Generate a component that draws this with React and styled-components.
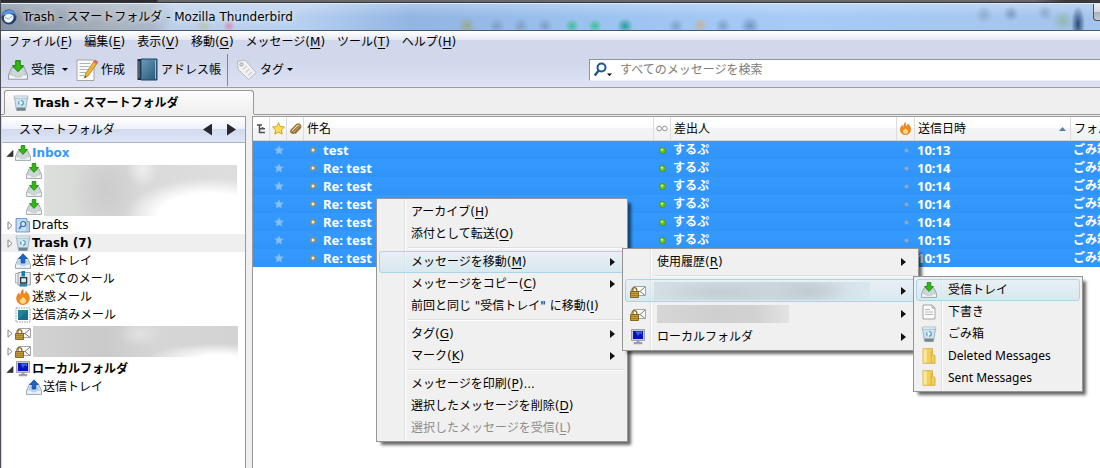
import React from "react";
import styled, { createGlobalStyle, css } from "styled-components";

const GlobalStyle = createGlobalStyle`
  * {
    box-sizing: border-box;
  }

  body {
    margin: 0;
    background-color: #fff;
    color: #000;
    font-family: "DejaVu Sans", "Noto Sans CJK JP", sans-serif;
    font-size: 12px;
    line-height: 18px;
  }

  button {
    margin: 0;
    padding: 0;
    border: none;
    background: none;
    color: inherit;
    font: inherit;
    text-align: left;
    white-space: nowrap;
  }

  svg {
    display: block;
    flex-shrink: 0;
  }
`;

const notoFont = css`
  font-family: "Noto Sans", "Noto Sans CJK JP", sans-serif;
`;

const Window = styled.div`
  position: relative;
  display: flex;
  flex-direction: column;
  min-height: 100vh;
  border-left: 1px solid #4b4e57;
  overflow: hidden;
`;

const Backdrop = styled.div`
  height: 3px;
  background: linear-gradient(90deg, #2c2c2e 0 155px, #66686a 158px 94%, #3a3a3a 97%);
  border-bottom: 1px solid #33373f;
`;

const TitleBar = styled.header`
  display: flex;
  align-items: center;
  gap: 6px;
  height: 28px;
  border-top: 1px solid #dfe9f5;
  border-bottom: 1px solid #46566f;
  background:
    radial-gradient(circle 7px at 571px 22px, #3fbf93, transparent),
    radial-gradient(circle 7px at 594px 22px, #3fbf93, transparent),
    radial-gradient(circle 8px at 624px 22px, #2a9d98, transparent),
    radial-gradient(circle 9px at 466px 22px, #9aa98c, transparent),
    radial-gradient(circle 8px at 496px 22px, #7f9fc4, transparent),
    radial-gradient(circle 8px at 520px 22px, #829fc5, transparent),
    radial-gradient(circle 8px at 544px 22px, #829fc5, transparent),
    radial-gradient(circle 8px at 675px 22px, #7fa2cb, transparent),
    radial-gradient(circle 7px at 699px 21px, #c5b39a, transparent),
    radial-gradient(circle 8px at 722px 22px, #7fa0cc, transparent),
    radial-gradient(circle 10px at 749px 22px, #7397c4, transparent),
    radial-gradient(circle 6px at 228px 22px, #d290b4, transparent),
    radial-gradient(circle 9px at 203px 22px, #b8c6b8, transparent),
    radial-gradient(circle 9px at calc(100% - 116px) 11px, #90adcf, transparent),
    radial-gradient(circle 8px at calc(100% - 89px) 10px, #7f9ec4, transparent),
    radial-gradient(circle 8px at calc(100% - 55px) 9px, #8fabcf, transparent),
    radial-gradient(circle 11px at calc(100% - 37px) 17px, #93b8b0, transparent),
    radial-gradient(ellipse 7px 18px at calc(100% - 22px) 20px, #2c4674, transparent),
    linear-gradient(180deg, rgba(255, 255, 255, 0.25), transparent 50%),
    linear-gradient(90deg, #8794a4 0, #a8b2be 110px, #a9b6c6 150px, #bccfe8 170px, #b7d0f0 300px, #92b5e2 410px, #9cc3f0 600px, #a7cbf6 800px, #a3c4eb 100%);
`;

const Title = styled.h1`
  margin: 0;
  font-size: 12px;
  font-weight: normal;
  text-shadow: 0 0 6px #fff, 0 0 8px rgba(255, 255, 255, 0.6);
`;

const CaptionButton = styled.button`
  align-self: flex-start;
  width: 7px;
  height: 17px;
  margin-left: auto;
  border: 1px solid #4a535f;
  border-top: none;
  border-right: none;
  border-radius: 0 0 0 4px;
  background: linear-gradient(180deg, #eceff2, #d3d8de 50%, #a9b0b9 50%, #c3cad2);
`;

const Chrome = styled.div`
  border-bottom: 1px solid #9b9ca3;
  background: linear-gradient(180deg, #fff 0, #e6e9f4 9px, #d2d8eb 9px, #d2d8eb 30px, #dde2f5 56px);
`;

const MenuBar = styled.nav`
  display: flex;
  gap: 12px;
  padding: 1px 7px 0;
  height: 21px;
`;

const Toolbar = styled.div`
  display: flex;
  align-items: center;
  height: 35px;
  padding-left: 7px;
`;

const ToolButton = styled.button`
  display: flex;
  align-items: center;
  gap: 3px;
  margin-right: ${({ $space }) => $space || 8}px;
`;

const Caret = styled.span`
  width: 0;
  margin-left: ${({ $tight }) => ($tight ? 0 : 4)}px;
  border: 3px solid transparent;
  border-top-color: #000;
  border-bottom: none;
`;

const ToolDivider = styled.div`
  width: 1px;
  height: 32px;
  margin-right: 8px;
  background-color: #83858c;
`;

const SearchBox = styled.label`
  display: flex;
  align-items: center;
  flex: 0 1 511px;
  gap: 7px;
  height: 22px;
  margin-left: auto;
  padding-left: 4px;
  border: 1px solid #8f949f;
  border-right: none;
  border-bottom-color: #eef0f8;
  background-color: #fff;
`;

const SearchInput = styled.input`
  flex: 1;
  min-width: 0;
  padding: 0;
  border: none;
  outline: none;
  background: none;
  font: inherit;

  &::placeholder {
    color: #7b7b7b;
    opacity: 1;
  }
`;

const TabStrip = styled.div`
  display: flex;
  height: 28px;
  background-color: #efefef;

  &::before {
    content: "";
    width: 3px;
    height: 26px;
    border-bottom: 1px solid #999;
  }

  &::after {
    content: "";
    flex: 1;
    height: 26px;
    border-bottom: 1px solid #999;
  }
`;

const Tab = styled.button`
  && {
    display: flex;
    align-items: center;
    gap: 4px;
    width: 250px;
    height: 24px;
    margin-top: 2px;
    padding-left: 8px;
    border: 1px solid #999;
    border-bottom: none;
    border-radius: 3px 3px 0 0;
    background: linear-gradient(180deg, #fcfcfc, #efefef);
    font-weight: bold;
  }
`;

const Body = styled.div`
  display: flex;
  flex: 1;
  gap: 6px;
  background-color: #efefef;
`;

const Sidebar = styled.aside`
  flex: 0 0 245px;
  border-top: 1px solid #999;
  border-right: 1px solid #999;
  border-left: 1px solid #d8d8dc;
  background-color: #fff;
`;

const SidebarHeader = styled.div`
  display: flex;
  align-items: center;
  gap: 15px;
  height: 26px;
  margin-bottom: 1px;
  padding: 0 9px 0 17px;
  border-bottom: 1px solid #a7b2c5;
  background: linear-gradient(180deg, #fff, #eef0f9 50%, #d3daef 50%, #dfe5f6);

  span {
    flex: 1;
  }
`;

const ArrowButton = styled.button`
  width: 9px;
  height: 12px;
  background-color: #26282d;
  clip-path: ${({ $next }) =>
    $next ? "polygon(0 0, 100% 50%, 0 100%)" : "polygon(100% 0, 0 50%, 100% 100%)"};
`;

const FolderList = styled.ul`
  margin: 0;
  padding: 0;
  list-style: none;
`;

const FolderRow = styled.li`
  display: flex;
  align-items: center;
  gap: 1px;
  height: 18px;
  padding-left: ${({ $level }) => ($level ? 24 : 3)}px;
  font-weight: ${({ $bold }) => ($bold ? "bold" : "normal")};
  color: ${({ $active }) => ($active ? "#3399ff" : "#000")};
  background-color: ${({ $selected }) => ($selected ? "#efefef" : "transparent")};
`;

const FolderName = styled.span`
  white-space: nowrap;
`;

const Twisty = styled.span`
  display: flex;
  justify-content: center;
  width: 9px;
`;

const HiddenGroup = styled.li`
  display: flex;

  > ul {
    flex-shrink: 0;
  }
`;

const smudges = {
  inbox: `
    radial-gradient(ellipse 85px 38px at 86% 100%, #fff 60%, rgba(255, 255, 255, 0)),
    radial-gradient(ellipse 16px 18px at 51% 8%, #eee, rgba(238, 238, 238, 0)),
    radial-gradient(ellipse 34px 40px at 32% 50%, #cccccc, rgba(204, 204, 204, 0)),
    linear-gradient(90deg, #dcdfdc, #d5d5d5 35%, #dadada 55%, #dedede)`,
  account: `
    radial-gradient(ellipse 70px 16px at 90% 108%, #fff 30%, rgba(255, 255, 255, 0)),
    radial-gradient(ellipse 22px 14px at 52% 25%, #e2e2e2, rgba(226, 226, 226, 0)),
    linear-gradient(90deg, #d2d2d2, #cacaca 35%, #d6d6d6 60%, #d3d3d3)`,
  highlight: `
    radial-gradient(ellipse 40px 12px at 72% 50%, #c0cad0, rgba(192, 202, 208, 0)),
    radial-gradient(ellipse 60px 12px at 30% 55%, #c3ced3, rgba(195, 206, 211, 0)),
    linear-gradient(90deg, #d3dfe4, #cbd6db 60%, #d9e7ee)`,
  plain: "linear-gradient(90deg, #d6d6d6, #cfcfcf 45%, #d2d2d2 75%, #e3e3e3)",
};

const Smudge = styled.div`
  flex: ${({ $width }) => ($width ? "0 0 auto" : "1")};
  width: ${({ $width }) => ($width ? `${$width}px` : "auto")};
  height: ${({ $height }) => $height}px;
  margin: ${({ $margin }) => $margin || "0"};
  background: ${({ $tone }) => smudges[$tone]};
`;

const Messages = styled.main`
  flex: 1;
  min-width: 0;
  border-top: 1px solid #999;
  border-left: 1px solid #999;
  background-color: #fff;
`;

const MessageTable = styled.table`
  width: 100%;
  table-layout: fixed;
  border-collapse: separate;
  border-spacing: 0;
`;

const HeadCell = styled.th`
  height: 24px;
  padding: 0 0 0 ${({ $icon }) => ($icon ? 0 : 3)}px;
  border-right: 1px solid #dcdcde;
  border-bottom: 1px solid #d5d5d5;
  background: linear-gradient(180deg, #fff, #fdfdfd 45%, #f3f4f6 50%, #f1f2f4);
  font-weight: normal;
  text-align: left;
  overflow: hidden;

  &:last-child {
    border-right: none;
  }
`;

const HeadButton = styled.button`
  display: flex;
  align-items: center;
  justify-content: ${({ $icon }) => ($icon ? "center" : "space-between")};
  width: 100%;
  height: 18px;
  padding-right: ${({ $icon }) => ($icon ? 0 : 4)}px;
`;

const MessageRow = styled.tr`
  background: linear-gradient(180deg, #3399ff, #3399ff 40%, #2f93f8);
  color: #fff;
  font-weight: bold;
`;

const Cell = styled.td`
  height: 18px;
  padding: 0 0 0 ${({ $indent }) => $indent || 0}px;
  line-height: 18px;
  white-space: nowrap;
  overflow: hidden;
  ${({ $latin }) =>
    $latin &&
    css`
      ${notoFont}
      font-size: 13px;
    `}

  > svg {
    margin: 0 auto;
  }
`;

const Subject = styled.div`
  display: flex;
  align-items: center;
  gap: 6px;
`;

const Popup = styled.div`
  position: absolute;
  top: ${({ $top }) => $top}px;
  left: ${({ $left }) => $left}px;
  width: ${({ $width }) => $width}px;
  padding: 2px;
  border: 1px solid #959595;
  background: linear-gradient(90deg, #f0f0f0 28px, #dfdfdf 28px 29px, #fff 29px 30px, #f0f0f0 30px);
  background-origin: border-box;
  box-shadow: 4px 4px 3px -1px rgba(0, 0, 0, 0.6);
`;

const MenuItem = styled.button`
  && {
    display: flex;
    align-items: center;
    width: 100%;
    height: ${({ $tall }) => ($tall ? 23 : 22)}px;
    padding-right: 9px;
    border: 1px solid transparent;
    border-radius: 3px;
    color: ${({ disabled }) => (disabled ? "#8d8d8d" : "#000")};
    ${({ $noto }) => $noto && notoFont}
    ${({ $open }) =>
      $open &&
      css`
        border-color: #a9d5e6;
        background: linear-gradient(180deg, rgba(226, 240, 247, 0.55), rgba(207, 230, 240, 0.75));
      `}
  }
`;

const MenuIcon = styled.span`
  display: flex;
  width: 31px;
  padding-left: 4px;
`;

const MenuLabel = styled.span`
  flex: 1;
`;

const Separator = styled.hr`
  height: 2px;
  margin: 2px 1px 2px 29px;
  border: none;
  border-top: 1px solid #dedede;
  border-bottom: 1px solid #fff;
`;

const SubmenuArrow = styled.span`
  border: 4px solid transparent;
  border-left: 5px solid #111;
  border-right: none;
`;

const Key = styled.u`
  text-underline-offset: 2px;
`;

/* icons */

const InboxIcon = ({ size = 16 }) => (
  <svg width={size} height={size} viewBox="0 0 16 16">
    <path d="M3 6h10l2.6 6v3.4H.4V12z" fill="#f3f5f6" stroke="#969da1" strokeWidth=".9" />
    <path d="M3.6 7h8.8l2 5h-3l-1 1.6H5.6L4.6 12h-3z" fill="#cdd7da" stroke="#b3bdc1" strokeWidth=".6" />
    <path d="M6.2.5h3.6v4h2.7L8 9.4 3.5 4.5h2.7z" fill="#31b90d" stroke="#15800a" strokeWidth=".8" />
  </svg>
);

const OutboxIcon = () => (
  <svg width="16" height="16" viewBox="0 0 16 16">
    <path d="M3.5 5h9l3 7v3.4H.5V12z" fill="#eef3f8" stroke="#8f9ba8" strokeWidth=".9" />
    <path d="M4 6.2h8l2.3 5.5h-3.1l-1 1.5H5.8l-1-1.5H1.7z" fill="#b7d3ef" />
    <path d="M6.2 10V5.5H3.7L8 .8l4.3 4.7H9.8V10z" fill="#1766cf" stroke="#0b4093" strokeWidth=".7" />
  </svg>
);

const TrashIcon = ({ size = 16 }) => (
  <svg width={size} height={size} viewBox="0 0 16 16">
    <path d="M1.5 2.5h13l-2 13h-9z" fill="#cfe3ee" stroke="#8ba4b2" strokeWidth=".8" />
    <path d="M3.5 12.5h9l-.5 3H4z" fill="#76858d" />
    <path d="M1.2 1h13.6v2.2H1.2z" fill="#eef6fa" stroke="#94abb8" strokeWidth=".7" />
    <circle cx="8" cy="7.8" r="2.3" fill="#e8f4fb" stroke="#4a97c8" strokeWidth="1.2" strokeDasharray="3.2 1.6" />
  </svg>
);

const DraftsIcon = () => (
  <svg width="16" height="16" viewBox="0 0 16 16">
    <path d="M1 1.5h11v3h2.5V15H1z" fill="#a9cbed" stroke="#6a98c8" strokeWidth=".9" />
    <path d="M2 2.5h9v11.7H2z" fill="#c6def5" />
    <circle cx="8.2" cy="7" r="2.5" fill="#d9ebfc" stroke="#3c6fb0" strokeWidth="1.2" />
    <path d="M6.3 9 4 12" stroke="#3c6fb0" strokeWidth="1.6" />
  </svg>
);

const AllMailIcon = () => (
  <svg width="16" height="16" viewBox="0 0 16 16">
    <path d="M.6 2.5h10V12H.6z" fill="#f4f6f6" stroke="#a2a9ad" strokeWidth=".9" />
    <path d="M3 1.500h12.400V14H3z" fill="#e4e8ea" stroke="#8e979c" strokeWidth=".9" />
    <path d="M6.500 0h3.500v5.500H6.500z" fill="#1d7ca2" />
    <path d="M5.600 6.600h6v5.400h-6z" fill="#dcebf0" stroke="#26343b" strokeWidth="1.300" />
    <path d="M4.500 13h7.500v2.600H4.500z" fill="#2c87a8" />
  </svg>
);

const FlameIcon = ({ size = 16 }) => (
  <svg width={size} height={size} viewBox="0 0 16 16">
    <path d="M7.8.5c.8 2.2-.2 3.4 1 4.7C10.4 5 11 3.700 10.800 2.400c2.400 1.900 3.500 4.200 3.500 6.800 0 3.700-2.800 6.300-6.400 6.300S1.700 13 1.700 9.400c0-2.500 1.100-4 2.300-5.200.1 1.400.400 2.300 1.300 2.800C6.300 5 5.500 3 7.800.5z" fill="#f08a1a" stroke="#d96e0a" strokeWidth=".7" />
    <path d="M8.300 7.500c.3 1.800 2.800 2.300 2.800 4.500 0 1.700-1.400 2.700-3.100 2.700s-3.200-1-3.200-2.900c0-1.800 2.700-2.300 3.500-4.300z" fill="#ffd98a" />
  </svg>
);

const SentIcon = () => (
  <svg width="16" height="16" viewBox="0 0 16 16">
    <path d="M1 1h14v14H1z" fill="#fff" stroke="#8f9698" strokeWidth="1" strokeDasharray="1.500 1" />
    <path d="M3 3h10v10H3z" fill="#1f849c" />
    <path d="M3 13 13 3v10z" fill="#17708a" />
  </svg>
);

const AccountIcon = () => (
  <svg width="16" height="16" viewBox="0 0 16 16">
    <path d="M3.500 3.500h12v9h-12z" fill="#fafafa" stroke="#a5a5a5" />
    <path d="m15 4-5 4.500 5 4M10 8.500H7" fill="none" stroke="#808080" />
    <path d="M2 8.500V7a2.400 2.400 0 0 1 4.800 0v1.500" fill="none" stroke="#8a6a1c" strokeWidth="1.300" />
    <path d="M.5 8.500h8v6h-8z" fill="#c29a37" stroke="#7d5d13" strokeWidth=".9" />
    <path d="M1 10.500h7M1 12.500h7" stroke="#9b7623" strokeWidth=".7" />
  </svg>
);

const ComputerIcon = () => (
  <svg width="16" height="16" viewBox="0 0 16 16">
    <path d="M1.500.6h13v10.800h-13z" fill="#c8ccd3" stroke="#878d98" strokeWidth=".8" />
    <path d="M3 2h10v8H3z" fill="#0712c4" />
    <path d="m5.500 2.500 2.500 4.500 2-3 2 1.500v-3z" fill="#3c63e0" />
    <path d="M6.500 11.400h3V13h2.800v2.200H3.700V13h2.800z" fill="#9ba0aa" />
  </svg>
);

const PageIcon = () => (
  <svg width="16" height="16" viewBox="0 0 16 16">
    <path d="M2 1h9l3 3v11H2z" fill="#fbfbfb" stroke="#a3a3a3" />
    <path d="M11 1v3h3" fill="none" stroke="#a3a3a3" />
    <path d="M4 5.500h5M4 8h8M4 10.500h8" stroke="#b5b5b5" />
  </svg>
);

const FolderIcon = () => (
  <svg width="16" height="16" viewBox="0 0 16 16">
    <path d="M2 .7h9.500v5.800l2.500 1v7.800H2z" fill="#f3cf5d" stroke="#d0a42f" strokeWidth=".8" />
    <path d="M2.500 1.200h3.200v13.600H2.500z" fill="#fbe79a" />
    <path d="M10.300 3v12" stroke="#dcb13e" />
  </svg>
);

const ComposeIcon = () => (
  <svg width="22" height="24" viewBox="0 0 22 24">
    <path d="M1 2h17v20.500H1z" fill="#fcfcfb" stroke="#a6a6a0" />
    <path d="M3.500 5.500h11M3.500 8.500h10M3.500 11.500h8M3.500 14.500h7M3.500 17.500h5" stroke="#a9b5b7" />
    <path d="m19 2 3 2-9.500 13.500-4 2.500 1.200-4.600z" fill="#f0b43b" stroke="#a97723" strokeWidth=".8" />
    <path d="m19 2 3 2-1.500 2.200-3-2z" fill="#e06963" />
    <path d="m8.500 20 .6-2.200 1.400 1z" fill="#333" />
  </svg>
);

const BookIcon = () => (
  <svg width="21" height="23" viewBox="0 0 21 23">
    <defs>
      <linearGradient id="cover" x1="0" y1="0" x2="1" y2="1">
        <stop offset="0" stopColor="#6c9bbb" />
        <stop offset="1" stopColor="#255779" />
      </linearGradient>
    </defs>
    <path d="M.5 1h4v21h-4z" fill="#222c38" />
    <path d="M4 1h16v21H4z" fill="url(#cover)" stroke="#1b4667" />
    <path d="M18.500 2v19" stroke="#b6cddb" strokeWidth=".8" />
    <path d="M2 3v17" stroke="#9aa6b0" strokeWidth=".8" />
  </svg>
);

const TagIcon = () => (
  <svg width="21" height="22" viewBox="0 0 21 22">
    <path d="M1.500 2.500 9 1l11 12.500-7.500 7L2 10z" fill="#f2f2f2" stroke="#b9b9bd" />
    <circle cx="5.500" cy="5.500" r="1.700" fill="#d2d8eb" stroke="#aaa" />
    <path d="m7 10.500 4-3.500M9.500 13.500l4-3.500M12 16.500l4-3.500" stroke="#cfcfd2" strokeWidth="1.300" />
  </svg>
);

const BirdIcon = () => (
  <svg width="16" height="16" viewBox="0 0 16 16">
    <circle cx="8" cy="8" r="7.500" fill="#1d4174" />
    <path d="M1 7C1.500 3 5 .8 9 1c4 .3 6.500 3.500 6 7-.3-2-2-3.500-4-3.500-2.500 0-3 1.500-5 1.500C4 6 3 5.500 1 7z" fill="#5595d8" />
    <path d="M3 8c1-3 6-4 9-2 1.500 2.500 0 6.500-3.500 7.500C5.500 14.300 2.500 12 3 8z" fill="#f1f4f7" />
    <path d="m4 8.500 3.500 1.500L11 7" fill="none" stroke="#9aa9bb" />
  </svg>
);

const SearchIcon = () => (
  <svg width="19" height="16" viewBox="0 0 19 16">
    <circle cx="7.500" cy="5.500" r="4" fill="none" stroke="#1c5692" strokeWidth="2" />
    <path d="M4.700 8.500.8 13.500" stroke="#1c5692" strokeWidth="2.400" />
    <path d="M13 11.500h5L15.500 14z" fill="#000" />
  </svg>
);

const ThreadIcon = () => (
  <svg width="9" height="10" viewBox="0 0 9 10">
    <path d="M0 1h5M2.500 1v7.500H8M2.500 4.800H8M5.500 3v2" fill="none" stroke="#4a5054" strokeWidth="1.500" />
  </svg>
);

const StarIcon = ({ faded }) => (
  <svg width={faded ? 10 : 13} height={faded ? 10 : 13} viewBox="0 0 12 12">
    <path d="m6 .6 1.600 3.600 3.900.4-2.900 2.700.8 3.900L6 9.200l-3.400 2 .8-3.900L.5 4.600l3.900-.4z" fill={faded ? "#86bff7" : "#ffe052"} stroke={faded ? "#78b3ec" : "#d59b1d"} strokeWidth={faded ? 0.3 : 0.9} />
  </svg>
);

const ClipIcon = () => (
  <svg width="13" height="12" viewBox="0 0 13 12">
    <path d="m3.500 9 5.300-5.300c.9-.8 2 .3 1.200 1.200L5.300 9.700c-1.500 1.500-4.600-.4-3-2.700L7.500 1.800c2.300-2 5.500 1 3.500 3.400L6.500 10" fill="none" stroke="#9a7430" strokeWidth="1.500" strokeLinecap="round" />
  </svg>
);

const GlassesIcon = () => (
  <svg width="12" height="7" viewBox="0 0 12 7">
    <circle cx="3.200" cy="3.500" r="2.300" fill="#fff" stroke="#8f9496" />
    <circle cx="8.800" cy="3.500" r="2.300" fill="#fff" stroke="#8f9496" />
  </svg>
);

const NewMark = () => (
  <svg width="8" height="8" viewBox="0 0 8 8">
    <path d="M4 .3v7.400M.3 4h7.400M1.500 1.500l5 5M6.500 1.500l-5 5" stroke="#c98a1c" strokeWidth=".9" />
    <circle cx="4" cy="4" r="1.500" fill="#fff1a8" />
  </svg>
);

const Dot = ({ green }) => (
  <svg width="7" height="7" viewBox="0 0 7 7">
    {green ? (
      <>
        <circle cx="3.500" cy="3.500" r="3" fill="#74c414" stroke="#3b8c10" strokeWidth=".7" />
        <circle cx="3" cy="2.600" r="1.200" fill="#c9f08b" />
      </>
    ) : (
      <circle cx="3.500" cy="3.500" r="2" fill="#9aa3b2" />
    )}
  </svg>
);

const TwistyIcon = ({ open }) => (
  <svg width="8" height="9" viewBox="0 0 8 9">
    {open ? (
      <path d="M7 1.500V7.500H1z" fill="#333" stroke="#222" strokeWidth=".6" />
    ) : (
      <path d="M2 .8 6 4.500 2 8.200z" fill="#fff" stroke="#858585" />
    )}
  </svg>
);

const menus = [
  ["ファイル", "F"],
  ["編集", "E"],
  ["表示", "V"],
  ["移動", "G"],
  ["メッセージ", "M"],
  ["ツール", "T"],
  ["ヘルプ", "H"],
];

const messages = [
  ["test", "10:13"],
  ["Re: test", "10:14"],
  ["Re: test", "10:14"],
  ["Re: test", "10:14"],
  ["Re: test", "10:14"],
  ["Re: test", "10:15"],
  ["Re: test", "10:15"],
];

const Label = ({ text, accessKey, after }) => (
  <>
    {text}
    {accessKey && (
      <>
        (<Key>{accessKey}</Key>)
      </>
    )}
    {after}
  </>
);

const Item = ({ icon, text, accessKey, after, submenu, children, ...props }) => (
  <MenuItem role="menuitem" {...props}>
    <MenuIcon>{icon}</MenuIcon>
    {children || (
      <MenuLabel>
        <Label text={text} accessKey={accessKey} after={after} />
      </MenuLabel>
    )}
    {submenu && <SubmenuArrow />}
  </MenuItem>
);

const Folder = ({ icon, name, twisty, ...props }) => (
  <FolderRow {...props}>
    {!props.$level && <Twisty>{twisty && <TwistyIcon open={twisty === "open"} />}</Twisty>}
    {icon}
    {name && <FolderName>{name}</FolderName>}
  </FolderRow>
);

const FolderPane = () => (
  <Sidebar>
    <SidebarHeader>
      <span>スマートフォルダ</span>
      <ArrowButton aria-label="Previous" />
      <ArrowButton $next aria-label="Next" />
    </SidebarHeader>
    <FolderList>
      <Folder icon={<InboxIcon />} name="Inbox" twisty="open" $bold $active />
      <HiddenGroup>
        <FolderList>
          <Folder icon={<InboxIcon />} $level={1} />
          <Folder icon={<InboxIcon />} $level={1} />
          <Folder icon={<InboxIcon />} $level={1} />
        </FolderList>
        <Smudge $tone="inbox" $height={51} $margin="3px 8px 0 2px" />
      </HiddenGroup>
      <Folder icon={<DraftsIcon />} name="Drafts" twisty="closed" />
      <Folder icon={<TrashIcon />} name="Trash (7)" twisty="closed" $bold $selected />
      <Folder icon={<OutboxIcon />} name="送信トレイ" />
      <Folder icon={<AllMailIcon />} name="すべてのメール" />
      <Folder icon={<FlameIcon />} name="迷惑メール" />
      <Folder icon={<SentIcon />} name="送信済みメール" />
      <HiddenGroup>
        <FolderList>
          <Folder icon={<AccountIcon />} twisty="closed" />
          <Folder icon={<AccountIcon />} twisty="closed" />
        </FolderList>
        <Smudge $tone="account" $height={31} $margin="2px 7px 0 2px" />
      </HiddenGroup>
      <Folder icon={<ComputerIcon />} name="ローカルフォルダ" twisty="open" $bold />
      <Folder icon={<OutboxIcon />} name="送信トレイ" $level={1} />
    </FolderList>
  </Sidebar>
);

const HeadColumn = ({ icon, label, children }) => (
  <HeadCell $icon={icon} scope="col">
    <HeadButton $icon={icon} aria-label={label}>
      {children}
    </HeadButton>
  </HeadCell>
);

const ThreadPane = () => (
  <Messages>
    <MessageTable>
      <colgroup>
        <col style={{ width: 17 }} />
        <col style={{ width: 17 }} />
        <col style={{ width: 17 }} />
        <col />
        <col style={{ width: 17 }} />
        <col style={{ width: 226 }} />
        <col style={{ width: 18 }} />
        <col style={{ width: 156 }} />
        <col style={{ width: 29 }} />
      </colgroup>
      <thead>
        <tr>
          <HeadColumn icon label="Thread"><ThreadIcon /></HeadColumn>
          <HeadColumn icon label="Starred"><StarIcon /></HeadColumn>
          <HeadColumn icon label="Attachment"><ClipIcon /></HeadColumn>
          <HeadColumn>件名</HeadColumn>
          <HeadColumn icon label="Read"><GlassesIcon /></HeadColumn>
          <HeadColumn>差出人</HeadColumn>
          <HeadColumn icon label="Junk"><FlameIcon size={13} /></HeadColumn>
          <HeadColumn>
            送信日時
            <svg width="7" height="4" viewBox="0 0 7 4">
              <path d="M0 4 3.500 0 7 4z" fill="#52839c" />
            </svg>
          </HeadColumn>
          <HeadColumn>フォルダ</HeadColumn>
        </tr>
      </thead>
      <tbody>
        {messages.map(([subject, time], i) => (
          <MessageRow key={i}>
            <Cell />
            <Cell><StarIcon faded /></Cell>
            <Cell />
            <Cell $indent={5} $latin>
              <Subject>
                <NewMark />
                {subject}
              </Subject>
            </Cell>
            <Cell><Dot green /></Cell>
            <Cell $indent={2}>するぷ</Cell>
            <Cell><Dot /></Cell>
            <Cell $indent={2} $latin>{time}</Cell>
            <Cell $indent={2}>ごみ箱</Cell>
          </MessageRow>
        ))}
      </tbody>
    </MessageTable>
  </Messages>
);

const ContextMenu = () => (
  <>
    <Popup role="menu" $left={375} $top={198} $width={252}>
      <Item text="アーカイブ" accessKey="H" />
      <Item text="添付として転送" accessKey="O" />
      <Separator />
      <Item text="メッセージを移動" accessKey="M" submenu $open />
      <Item text="メッセージをコピー" accessKey="C" submenu />
      <Item text={'前回と同じ "受信トレイ" に移動'} accessKey="I" />
      <Separator />
      <Item text="タグ" accessKey="G" submenu />
      <Item text="マーク" accessKey="K" submenu />
      <Separator />
      <Item text="メッセージを印刷" accessKey="P" after="..." />
      <Item text="選択したメッセージを削除" accessKey="D" />
      <Item text="選択したメッセージを受信" accessKey="L" disabled />
    </Popup>
    <Popup role="menu" $left={621} $top={248} $width={297}>
      <Item text="使用履歴" accessKey="R" submenu />
      <Separator />
      <Item icon={<AccountIcon />} submenu $tall $open aria-label="Account 1">
        <Smudge $tone="highlight" $width={216} $height={18} $margin="0 auto 0 -3px" />
      </Item>
      <Item icon={<AccountIcon />} submenu $tall aria-label="Account 2">
        <Smudge $tone="plain" $width={132} $height={18} $margin="0 auto 0 0" />
      </Item>
      <Item icon={<ComputerIcon />} text="ローカルフォルダ" submenu $tall />
    </Popup>
    <Popup role="menu" $left={912} $top={276} $width={170}>
      <Item icon={<InboxIcon />} text="受信トレイ" $open />
      <Item icon={<PageIcon />} text="下書き" />
      <Item icon={<TrashIcon />} text="ごみ箱" />
      <Item icon={<FolderIcon />} text="Deleted Messages" $noto />
      <Item icon={<FolderIcon />} text="Sent Messages" $noto />
    </Popup>
  </>
);

const App = () => (
  <>
    <GlobalStyle />
    <Window>
      <Backdrop />
      <TitleBar>
        <BirdIcon />
        <Title>Trash - スマートフォルダ - Mozilla Thunderbird</Title>
        <CaptionButton aria-label="Minimize" />
      </TitleBar>
      <Chrome>
        <MenuBar>
          {menus.map(([text, key]) => (
            <button key={key}>
              <Label text={text} accessKey={key} />
            </button>
          ))}
        </MenuBar>
        <Toolbar>
          <ToolButton>
            <InboxIcon size={20} />
            受信
            <Caret />
          </ToolButton>
          <ToolButton $space={12}>
            <ComposeIcon />
            作成
          </ToolButton>
          <ToolButton $space={6}>
            <BookIcon />
            アドレス帳
          </ToolButton>
          <ToolDivider />
          <ToolButton>
            <TagIcon />
            タグ
            <Caret $tight />
          </ToolButton>
          <SearchBox>
            <SearchIcon />
            <SearchInput type="text" placeholder="すべてのメッセージを検索" aria-label="すべてのメッセージを検索" />
          </SearchBox>
        </Toolbar>
      </Chrome>
      <TabStrip>
        <Tab>
          <TrashIcon />
          Trash - スマートフォルダ
        </Tab>
      </TabStrip>
      <Body>
        <FolderPane />
        <ThreadPane />
      </Body>
      <ContextMenu />
    </Window>
  </>
);

export default App;
